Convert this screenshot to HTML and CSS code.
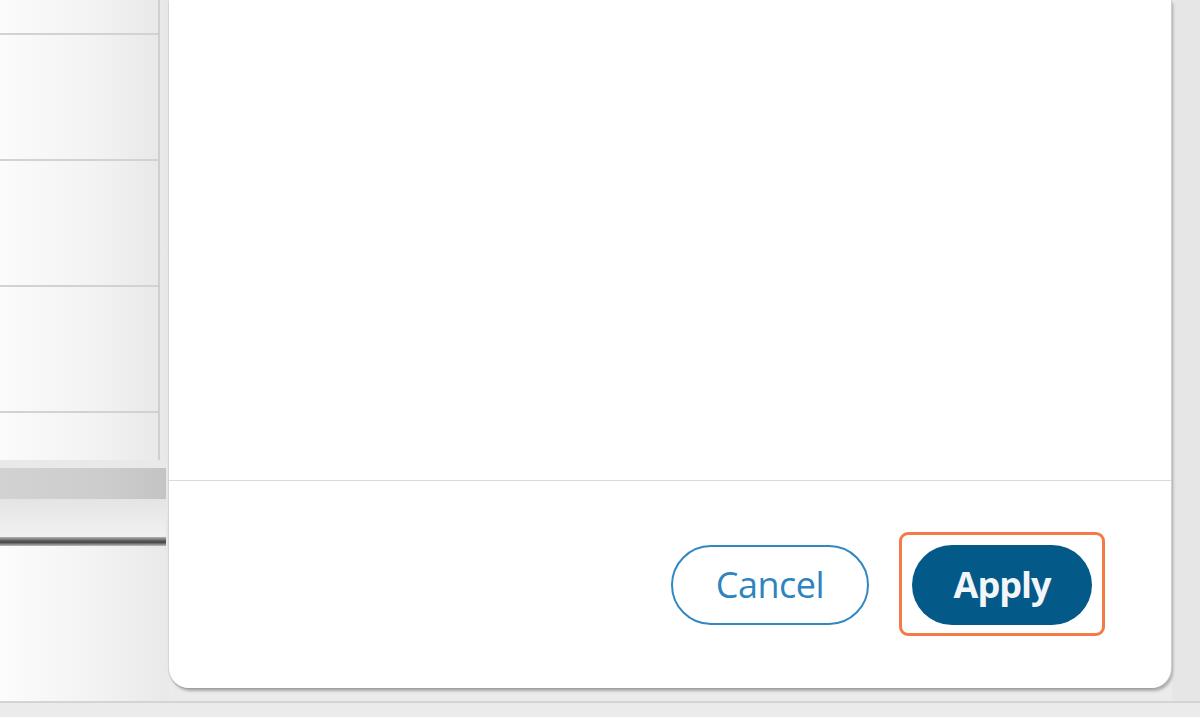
FILE: index.html
```html
<!DOCTYPE html>
<html lang="en">
<head>
<meta charset="utf-8">
<title>Dialog</title>
<link rel="stylesheet" href="styles.css">
</head>
<body>
<div class="app">
  <div class="backdrop">
    <div class="sheet">
      <div class="grid">
        <div class="row row-first"></div>
        <div class="row"></div>
        <div class="row"></div>
        <div class="row"></div>
        <div class="row row-last"></div>
      </div>
      <div class="gap-a"></div>
      <div class="hbar"></div>
      <div class="gap-b"></div>
      <div class="darkline"></div>
      <div class="sheet-rest"></div>
    </div>
    <div class="side"></div>
  </div>
  <div class="bottom-line"></div>

  <div class="modal">
    <div class="modal-body"></div>
    <div class="modal-footer">
      <button class="btn btn-outline" type="button">Cancel</button>
      <div class="highlight">
        <button class="btn btn-primary" type="button">Apply</button>
      </div>
    </div>
  </div>
</div>
</body>
</html>
```

FILE: styles.css
```css
html, body {
  margin: 0;
  padding: 0;
}

body {
  width: 1200px;
  height: 717px;
  overflow: hidden;
  font-family: "Open Sans", "Noto Sans", "Liberation Sans", sans-serif;
  background: #ebebeb;
}

.app {
  position: relative;
  width: 1200px;
  height: 717px;
  display: flex;
  flex-direction: column;
}

.backdrop {
  display: flex;
  height: 701px;
}

.sheet {
  width: 169px;
  display: flex;
  flex-direction: column;
  background: linear-gradient(to right, #fbfbfb 0%, #f3f3f3 55%, #e7e7e7 100%);
}

.grid {
  display: flex;
  flex-direction: column;
  height: 460px;
  margin-right: 9px;
  border-right: 2px solid #cfcfcf;
}

.row {
  height: 124px;
  border-bottom: 2px solid #d2d2d2;
}

.row-first {
  height: 33px;
}

.row-last {
  flex: 1;
  border-bottom: none;
}

.gap-a {
  height: 8px;
  background: #e9e9e9;
  margin-right: 3px;
}

.hbar {
  height: 31px;
  margin-right: 3px;
  background: linear-gradient(to right, #d2d2d2 0%, #cdcdcd 60%, #c4c4c4 100%);
}

.gap-b {
  height: 38px;
  margin-right: 3px;
  background: linear-gradient(to bottom, #e4e4e4 0%, #f1f1f1 100%);
}

.darkline {
  height: 9px;
  margin-right: 3px;
  background: linear-gradient(to bottom, #b5b5b5 0%, #555555 45%, #4a4a4a 60%, #bdbdbd 100%);
}

.sheet-rest {
  flex: 1;
  background: linear-gradient(to right, #fcfcfc 0%, #f4f4f4 50%, #e9e9e9 100%);
}

.side {
  margin-left: auto;
  width: 28px;
  background: #e6e6e6;
}

.bottom-line {
  height: 2px;
  background: #d4d4d4;
}

.modal {
  position: absolute;
  left: 169px;
  top: 0;
  width: 1002px;
  height: 688px;
  background: #ffffff;
  border-radius: 0 0 20px 20px;
  box-shadow: 1px 0 0 #cfcfcf, 2px 3px 3px rgba(0, 0, 0, 0.28), -1px 1px 1px rgba(0, 0, 0, 0.08);
  display: flex;
  flex-direction: column;
}

.modal-body {
  flex: 1;
}

.modal-footer {
  height: 208px;
  border-top: 1px solid #dadada;
  display: flex;
  align-items: center;
  justify-content: flex-end;
  gap: 30px;
  padding-right: 66px;
  padding-bottom: 0;
  box-sizing: border-box;
}

.highlight {
  border: 3px solid #f47a46;
  border-radius: 9px;
  padding: 10px 10px 8px 10px;
  display: flex;
  margin-top: -1px;
}

.btn {
  height: 80px;
  border-radius: 40px;
  font-family: "Open Sans", "Noto Sans", "Liberation Sans", sans-serif;
  font-size: 36px;
  line-height: 1;
  padding: 0;
  cursor: pointer;
}

.btn-outline {
  width: 198px;
  background: #ffffff;
  border: 2px solid #3087c3;
  color: #2e84c0;
  font-weight: 400;
  letter-spacing: -0.5px;
}

.btn-primary {
  width: 180px;
  background: #035a88;
  border: none;
  color: #f2f6f9;
  font-weight: 700;
  letter-spacing: -1px;
}
```
